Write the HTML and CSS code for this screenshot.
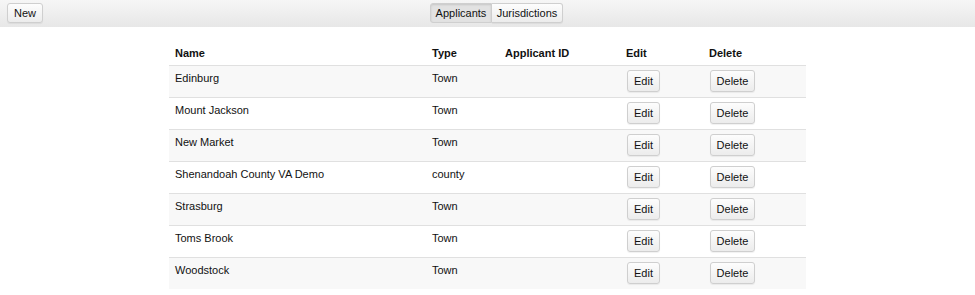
FILE: index.html
```html
<!DOCTYPE html>
<html>
<head>
<meta charset="utf-8">
<link rel="stylesheet" href="styles.css">
</head>
<body>
<div class="topbar">
  <button class="btn btn-new">New</button>
  <div class="seg">
    <button class="btn seg-btn active">Applicants</button><button class="btn seg-btn">Jurisdictions</button>
  </div>
</div>
<table class="grid">
  <colgroup>
    <col class="c-name"><col class="c-type"><col class="c-id"><col class="c-edit"><col class="c-del">
  </colgroup>
  <thead>
    <tr><th>Name</th><th>Type</th><th>Applicant ID</th><th>Edit</th><th>Delete</th></tr>
  </thead>
  <tbody>
    <tr><td>Edinburg</td><td>Town</td><td></td><td class="act"><button class="btn b-edit">Edit</button></td><td class="act"><button class="btn b-del">Delete</button></td></tr>
    <tr><td>Mount Jackson</td><td>Town</td><td></td><td class="act"><button class="btn b-edit">Edit</button></td><td class="act"><button class="btn b-del">Delete</button></td></tr>
    <tr><td>New Market</td><td>Town</td><td></td><td class="act"><button class="btn b-edit">Edit</button></td><td class="act"><button class="btn b-del">Delete</button></td></tr>
    <tr><td>Shenandoah County VA Demo</td><td>county</td><td></td><td class="act"><button class="btn b-edit">Edit</button></td><td class="act"><button class="btn b-del">Delete</button></td></tr>
    <tr><td>Strasburg</td><td>Town</td><td></td><td class="act"><button class="btn b-edit">Edit</button></td><td class="act"><button class="btn b-del">Delete</button></td></tr>
    <tr><td>Toms Brook</td><td>Town</td><td></td><td class="act"><button class="btn b-edit">Edit</button></td><td class="act"><button class="btn b-del">Delete</button></td></tr>
    <tr><td>Woodstock</td><td>Town</td><td></td><td class="act"><button class="btn b-edit">Edit</button></td><td class="act"><button class="btn b-del">Delete</button></td></tr>
  </tbody>
</table>
</body>
</html>
```
FILE: styles.css
```css
html, body {
  margin: 0;
  padding: 0;
  background: #fff;
  font-family: "Liberation Sans", Arial, sans-serif;
  font-size: 11px;
  color: #111;
}
.topbar {
  height: 27px;
  box-sizing: border-box;
  padding: 3px 7px 0;
  background: linear-gradient(#f6f6f6, #e7e7e7);
  display: grid;
  grid-template-columns: 1fr auto 1fr;
  align-items: start;
}
.btn {
  font-family: "Liberation Sans", Arial, sans-serif;
  font-size: 11px;
  color: #111;
  height: 22px;
  padding: 0;
  border: 1px solid #cfcfcf;
  border-radius: 3px;
  background: linear-gradient(#fdfdfd, #ececec);
  box-shadow: 0 1px 1px rgba(0,0,0,0.06);
  line-height: 20px;
  margin: 0;
  text-align: center;
}
.btn-new {
  justify-self: start;
  width: 36px;
  height: 20px;
  line-height: 18px;
}
.seg {
  display: flex;
  margin-left: 18px;
}
.seg-btn {
  height: 20px;
  line-height: 18px;
}
.seg-btn:first-child {
  border-radius: 3px 0 0 3px;
  width: 62px;
}
.seg-btn:last-child {
  border-radius: 0 3px 3px 0;
  border-left: none;
  width: 71px;
}
.seg-btn.active {
  background: #e2e2e2;
  box-shadow: inset 0 1px 2px rgba(0,0,0,0.12);
}
.grid {
  width: 637px;
  margin: 10px auto 0;
  border-collapse: collapse;
  table-layout: fixed;
}
.c-name { width: 257px; }
.c-type { width: 73px; }
.c-id { width: 121px; }
.c-edit { width: 83px; }
.c-del { width: 103px; }
.grid th {
  text-align: left;
  font-weight: bold;
  padding: 9px 6px 5px;
  line-height: 14px;
}
.grid td {
  border-top: 1px solid #e0e0e0;
  vertical-align: top;
  padding: 5px 6px 0;
  line-height: 14px;
}
.grid tbody tr:nth-child(odd) td {
  background: #f8f8f8;
}
.grid td.act {
  padding: 4px 6px 5px 7px;
}
.grid td.act .btn {
  display: block;
}
.b-edit { width: 33px; }
.b-del { width: 45px; }
```
